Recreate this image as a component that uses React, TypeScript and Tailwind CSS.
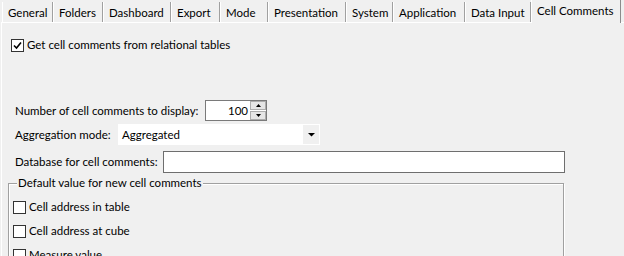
import React from "react";

const tabs = [
  { label: "General", w: 51 },
  { label: "Folders", w: 50 },
  { label: "Dashboard", w: 68 },
  { label: "Export", w: 49 },
  { label: "Mode", w: 48 },
  { label: "Presentation", w: 78 },
  { label: "System", w: 47 },
  { label: "Application", w: 72 },
  { label: "Data Input", w: 66 },
];

const CheckBox = ({ checked }: { checked?: boolean }) => (
  <span className="flex h-[13px] w-[13px] shrink-0 items-center justify-center border border-[#333333] bg-white">
    {checked && (
      <svg width="9" height="9" viewBox="0 0 9 9">
        <path d="M1 4.5 L3.5 7 L8 1.5" fill="none" stroke="#000" strokeWidth="1.6" />
      </svg>
    )}
  </span>
);

const CheckRow = ({ label, checked }: { label: string; checked?: boolean }) => (
  <div className="flex h-[24px] items-center gap-[3px]">
    <CheckBox checked={checked} />
    <span className="whitespace-nowrap">{label}</span>
  </div>
);

export default function App() {
  return (
    <div
      className="h-[256px] w-[624px] overflow-hidden whitespace-nowrap bg-[#f0f0f0] text-[11.5px] leading-none text-black"
      style={{ fontFamily: 'Lato, "Noto Sans", sans-serif' }}
    >
      {/* tab strip */}
      <div className="flex h-[22px] items-end pl-[2px]">
        {tabs.map((t) => (
          <div
            key={t.label}
            style={{ width: t.w }}
            className="flex h-[20px] items-center border-r border-r-[#a0a0a0] border-l border-l-white pl-[5px] pt-px"
          >
            {t.label}
          </div>
        ))}
        <div className="relative z-10 -mb-px flex h-[23px] w-[90px] items-start border-l border-l-white border-r border-r-[#8c8c8c] bg-[#f0f0f0] pl-[5px] pt-[5px]">
          Cell Comments
        </div>
      </div>

      {/* page */}
      <div className="h-[234px] border-t border-l border-white ml-px pl-[9px] pt-[10px]">
        <CheckRow label="Get cell comments from relational tables" checked />

        <div className="mt-[43px] flex flex-col gap-[3px] pl-[4px]">
          <div className="flex h-[21px] items-center">
            <span className="w-[190px]">Number of cell comments to display:</span>
            <div className="flex h-[21px] w-[62px] items-center border border-[#7a7a7a] bg-white">
              <span className="flex-1 pr-[2px] text-right">100</span>
              <div className="flex h-[19px] w-[16px] flex-col">
                <div className="flex h-[9px] items-center justify-center border border-[#adadad] bg-[#e6e6e6]">
                  <svg width="5" height="3" viewBox="0 0 5 3"><path d="M0 3 L2.5 0 L5 3Z" fill="#000" /></svg>
                </div>
                <div className="mt-px flex h-[9px] items-center justify-center border border-[#adadad] bg-[#e6e6e6]">
                  <svg width="5" height="3" viewBox="0 0 5 3"><path d="M0 0 L2.5 3 L5 0Z" fill="#000" /></svg>
                </div>
              </div>
            </div>
          </div>

          <div className="flex h-[21px] items-center">
            <span className="w-[103px]">Aggregation mode:</span>
            <div className="flex h-[21px] w-[202px] items-center bg-white pl-[4px]">
              <span className="flex-1">Aggregated</span>
              <div className="flex h-[21px] w-[18px] items-center justify-center border border-white bg-[#f0f0f0]">
                <svg width="7" height="4" viewBox="0 0 7 4"><path d="M0 0 H7 L3.5 3.5Z" fill="#000" /></svg>
              </div>
            </div>
          </div>

          <div className="mt-[3px] flex h-[22px] items-center">
            <span className="w-[148px]">Database for cell comments:</span>
            <div className="h-[22px] w-[402px] border border-[#6e6e6e] bg-white" />
          </div>
        </div>

        <div className="relative mt-[10px] ml-[-3px] h-[100px] w-[556px] border border-[#a0a0a0] shadow-[inset_1px_1px_0_#ffffff,1px_1px_0_#ffffff] pl-[4px] pt-[11px]">
          <span className="absolute left-[8px] top-[-7px] bg-[#f0f0f0] px-px">
            Default value for new cell comments
          </span>
          <CheckRow label="Cell address in table" />
          <CheckRow label="Cell address at cube" />
          <CheckRow label="Measure value" />
        </div>
      </div>
    </div>
  );
}
